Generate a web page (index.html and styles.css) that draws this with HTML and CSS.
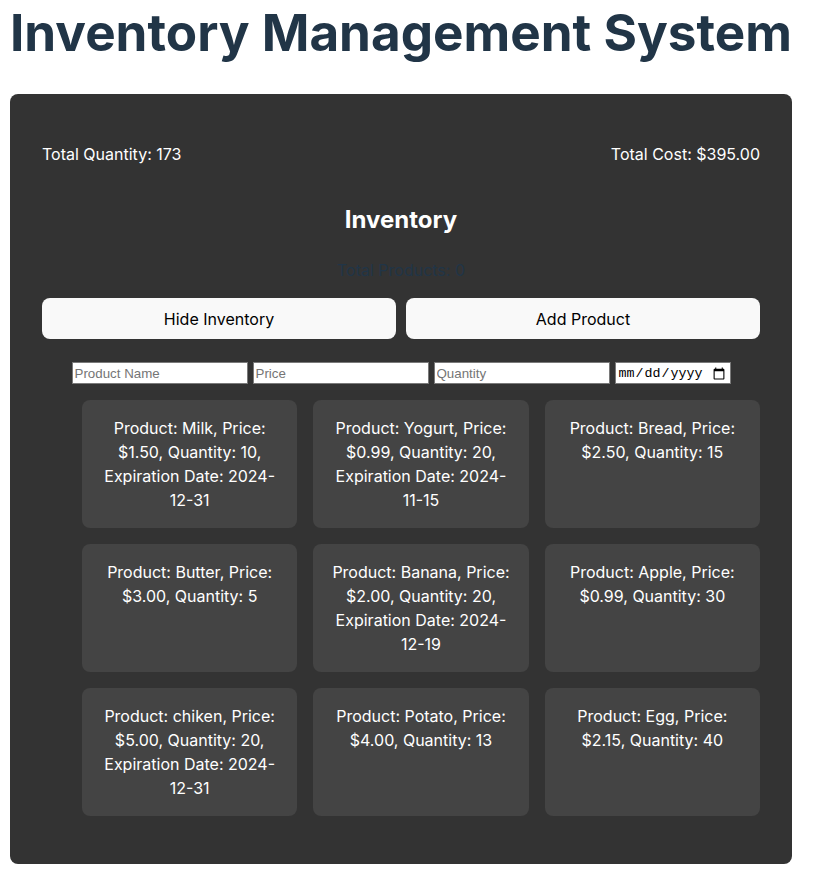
FILE: index.html
```html
<!DOCTYPE html>
<html lang="en">
<head>
<meta charset="utf-8">
<title>Inventory Management System</title>
<link rel="stylesheet" href="styles.css">
</head>
<body>
<h1 class="title">Inventory Management System</h1>
<div class="panel">
  <div class="stats">
    <p>Total Quantity: 173</p>
    <p>Total Cost: $395.00</p>
  </div>
  <h2 class="heading">Inventory</h2>
  <p class="count">Total Products: 0</p>
  <div class="actions">
    <button class="btn">Hide Inventory</button>
    <button class="btn">Add Product</button>
  </div>
  <form class="add-form">
    <input class="field" type="text" placeholder="Product Name">
    <input class="field" type="text" placeholder="Price">
    <input class="field" type="text" placeholder="Quantity">
    <input class="field date" type="date">
  </form>
  <ul class="grid">
    <li class="card">Product: Milk, Price: $1.50, Quantity: 10, Expiration Date: 2024-12-31</li>
    <li class="card">Product: Yogurt, Price: $0.99, Quantity: 20, Expiration Date: 2024-11-15</li>
    <li class="card">Product: Bread, Price: $2.50, Quantity: 15</li>
    <li class="card">Product: Butter, Price: $3.00, Quantity: 5</li>
    <li class="card">Product: Banana, Price: $2.00, Quantity: 20, Expiration Date: 2024-12-19</li>
    <li class="card">Product: Apple, Price: $0.99, Quantity: 30</li>
    <li class="card">Product: chiken, Price: $5.00, Quantity: 20, Expiration Date: 2024-12-31</li>
    <li class="card">Product: Potato, Price: $4.00, Quantity: 13</li>
    <li class="card">Product: Egg, Price: $2.15, Quantity: 40</li>
  </ul>
</div>
</body>
</html>
```
FILE: styles.css
```css
html, body {
  margin: 0;
  padding: 0;
  background: #ffffff;
}
body {
  padding: 0 10px;
  font-family: Inter, "Noto Sans", sans-serif;
  line-height: 1.5;
  font-weight: 400;
  color: #213547;
}
.title {
  font-size: 51.2px;
  line-height: 1.1;
  font-weight: 700;
  margin: 4px 0 34px 0;
  color: #213547;
  white-space: nowrap;
}
.panel {
  width: 782px;
  box-sizing: border-box;
  background: #333333;
  border-radius: 8px;
  padding: 32px;
  color: #ffffff;
}
.stats {
  display: flex;
  justify-content: space-between;
}
.stats p {
  margin: 16px 0;
  font-size: 16px;
}
.heading {
  text-align: center;
  font-size: 24px;
  font-weight: 700;
  margin: 19.92px 0;
  color: #ffffff;
}
.count {
  text-align: center;
  color: #213547;
  margin: 16px 0;
}
.actions {
  display: flex;
  gap: 10px;
}
.btn {
  flex: 1;
  border-radius: 8px;
  border: 1px solid transparent;
  padding: 0.6em 1.2em;
  font-size: 16px;
  font-weight: 400;
  font-family: inherit;
  background: #f9f9f9;
  color: #000000;
  line-height: 20px;
  cursor: pointer;
}
.add-form {
  display: flex;
  justify-content: center;
  gap: 5px;
  margin-top: 23px;
}
.field {
  box-sizing: border-box;
  width: 176px;
  height: 22px;
  margin: 0;
  padding: 1px 2px;
  border: 1px solid #7a7a7a;
  font-family: "Liberation Sans", Arial, sans-serif;
  font-size: 13.33px;
  background: #ffffff;
  color: #000000;
}
.field::placeholder {
  color: #757575;
}
.date {
  width: 116px;
  font-family: "Liberation Mono", "DejaVu Sans Mono", monospace;
}
.grid {
  display: grid;
  grid-template-columns: repeat(3, 1fr);
  gap: 16px;
  list-style: none;
  margin: 16px 0;
  padding: 0 0 0 40px;
}
.card {
  background: #444444;
  border-radius: 8px;
  padding: 16px;
  text-align: center;
  font-size: 16px;
  line-height: 24px;
  min-height: 96px;
  color: #ffffff;
}
```
